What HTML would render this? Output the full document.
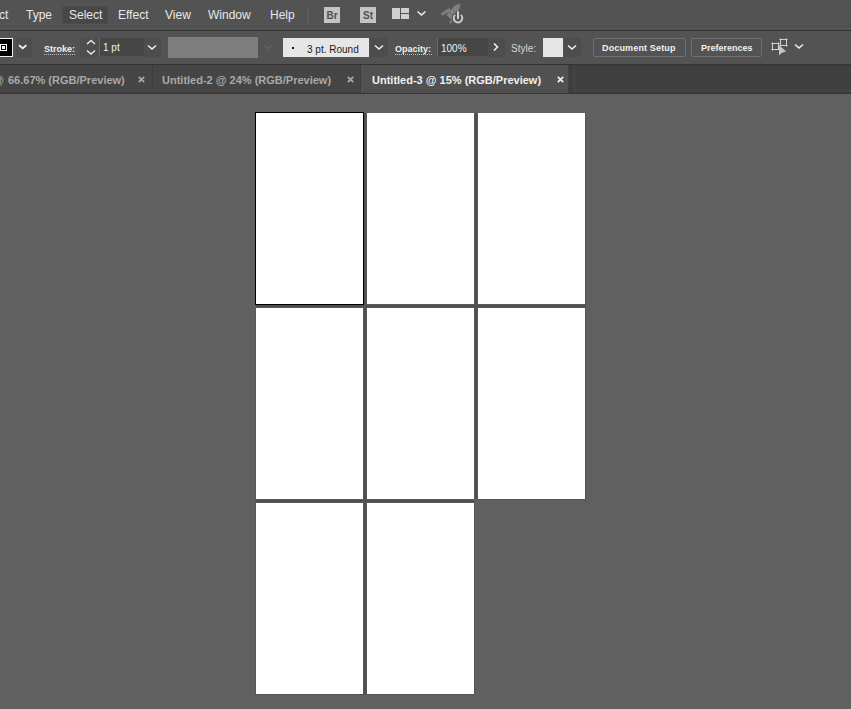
<!DOCTYPE html>
<html><head><meta charset="utf-8">
<style>
*{margin:0;padding:0;box-sizing:border-box}
html,body{width:851px;height:709px;overflow:hidden;background:#606060;font-family:"Liberation Sans",sans-serif}
.a{position:absolute}
#menu{left:0;top:0;width:851px;height:30px;background:#535353}
#mline{left:0;top:30px;width:851px;height:1px;background:#343434}
#ctrl{left:0;top:31px;width:851px;height:33px;background:#535353}
#cline{left:0;top:64px;width:851px;height:1px;background:#343434}
#tabs{left:0;top:65px;width:851px;height:28px;background:#404040}
.mi{top:8px;font-size:12px;color:#e8e8e8;white-space:nowrap;line-height:14px}
.ct{font-size:10px;white-space:nowrap;line-height:12px;margin-top:2px}
.tab{top:65px;height:24px;background:#454545}
.tt{top:74px;font-size:11px;font-weight:bold;color:#a9a9a9;white-space:nowrap;line-height:13px}
.ab{background:#fff}
.gv{background:linear-gradient(to right,#5a5a5a 0,#5a5a5a 1px,#4f4f4f 1px,#4f4f4f 3px,#585858 3px)}
.gh{background:linear-gradient(to bottom,#5a5a5a 0,#5a5a5a 1px,#4f4f4f 1px,#4f4f4f 3px,#585858 3px)}
</style></head><body>
<div id="menu" class="a"></div>
<div id="mline" class="a"></div>
<div class="a" style="left:0;top:26px;width:851px;height:1px;background:#4c4c4c"></div>
<div class="a" style="left:0;top:28px;width:851px;height:1px;background:#575757"></div>
<div id="ctrl" class="a"></div>
<div id="cline" class="a"></div>
<div id="tabs" class="a"></div>

<!-- menu -->
<div class="a mi" style="left:-1px">ct</div>
<div class="a mi" style="left:26px">Type</div>
<div class="a" style="left:62px;top:6px;width:46px;height:18px;background:#474747;border:1px solid #4c4c4c"></div>
<div class="a mi" style="left:69px">Select</div>
<div class="a mi" style="left:118px">Effect</div>
<div class="a mi" style="left:165px">View</div>
<div class="a mi" style="left:208px">Window</div>
<div class="a mi" style="left:270px">Help</div>
<div class="a" style="left:305px;top:8px;width:1px;height:16px;background:#4d4d4d"></div>
<div class="a" style="left:307px;top:8px;width:2px;height:16px;background:#5b5b5b"></div>
<div class="a" style="left:310px;top:8px;width:1px;height:16px;background:#4d4d4d"></div>
<div class="a" style="left:324px;top:7px;width:16px;height:16px;background:#c4c4c4;color:#505050;font-size:10px;font-weight:bold;text-align:center;line-height:17px">Br</div>
<div class="a" style="left:360px;top:7px;width:16px;height:16px;background:#c4c4c4;color:#505050;font-size:10px;font-weight:bold;text-align:center;line-height:17px">St</div>
<div class="a" style="left:392px;top:8px;width:8px;height:11px;background:#cfcfcf"></div>
<div class="a" style="left:401px;top:8px;width:8px;height:5px;background:#cfcfcf"></div>
<div class="a" style="left:401px;top:14px;width:8px;height:5px;background:#cfcfcf"></div>


<svg class="a" style="left:414px;top:8px" width="14" height="12"><polyline points="3.5,3.5 7.5,7 11.5,3.5" fill="none" stroke="#f0f0f0" stroke-width="1.6"/></svg>
<svg class="a" style="left:438px;top:0px" width="28" height="26">
<path d="M4.5 14 L11 9.8" stroke="#7e7e7e" stroke-width="3" stroke-linecap="round"/>
<path d="M8.3 15 L16.8 5.5 L22.5 3.5 L21.2 9.5 L12.7 19 Z" fill="#808080"/>
<path d="M11.5 12.5 L14.5 15.5 M14.5 9.5 L17.5 12.5" stroke="#666" stroke-width="0.9"/>
<path d="M12.5 22.5 L14.5 19" stroke="#777" stroke-width="2.4" stroke-linecap="round"/>
<circle cx="20" cy="18.3" r="6.4" fill="#535353"/>
<path d="M17.2 14.9 A4.3 4.3 0 1 0 22.8 14.9" fill="none" stroke="#cdcdcd" stroke-width="1.9"/>
<path d="M20 11 L20 19" stroke="#535353" stroke-width="3.4"/>
<path d="M20 12 L20 18.3" stroke="#d4d4d4" stroke-width="1.9" stroke-linecap="round"/>
</svg>

<!-- control bar -->
<div class="a" style="left:16px;top:38px;width:16px;height:19px;background:#4d4d4d"></div>
<div class="a" style="left:80px;top:38px;width:19px;height:19px;background:#4e4e4e"></div>
<div class="a" style="left:144px;top:38px;width:17px;height:19px;background:#4d4d4d"></div>
<div class="a" style="left:370px;top:38px;width:18px;height:19px;background:#4d4d4d"></div>
<div class="a" style="left:488px;top:38px;width:17px;height:19px;background:#4d4d4d"></div>
<div class="a" style="left:564px;top:38px;width:17px;height:19px;background:#4d4d4d"></div>

<div class="a" style="left:0;top:38px;width:13px;height:19px;background:#000;border:1px solid #f0f0f0;border-left:none"></div>
<div class="a" style="left:0;top:44px;width:7px;height:7px;background:#fff"></div>
<div class="a" style="left:1px;top:45px;width:5px;height:5px;background:#000"></div>
<div class="a" style="left:2px;top:46px;width:3px;height:3px;background:#fff"></div>
<svg class="a" style="left:16px;top:41px" width="14" height="12"><polyline points="3,4.3 6.7,7.3 10.4,4.3" fill="none" stroke="#f0f0f0" stroke-width="1.8"/></svg>
<div class="a ct" style="left:44px;top:41px;color:#f0f0f0;font-weight:bold;font-size:9px">Stroke:</div>
<div class="a" style="left:44px;top:54px;width:31px;height:1px;border-top:1px dotted #bdbdbd"></div>
<svg class="a" style="left:84px;top:38px" width="14" height="19"><polyline points="3,6 7,2.5 11,6" fill="none" stroke="#e8e8e8" stroke-width="1.4"/><polyline points="3,12.5 7,16 11,12.5" fill="none" stroke="#e8e8e8" stroke-width="1.4"/></svg>
<div class="a" style="left:99px;top:38px;width:1px;height:18px;background:#686868"></div>
<div class="a" style="left:100px;top:38px;width:44px;height:18px;background:#464646"></div>
<div class="a ct" style="left:103px;top:40px;color:#f0f0f0">1 pt</div>
<svg class="a" style="left:145px;top:41px" width="14" height="12"><polyline points="3,4.5 7,8 11,4.5" fill="none" stroke="#f0f0f0" stroke-width="1.6"/></svg>
<div class="a" style="left:168px;top:37px;width:90px;height:21px;background:#7e7e7e"></div>
<svg class="a" style="left:261px;top:41px" width="14" height="12"><polyline points="3,4.5 6.5,7.5 10,4.5" fill="none" stroke="#626262" stroke-width="1.6"/></svg>
<div class="a" style="left:283px;top:38px;width:86px;height:19px;background:#e6e6e6"></div>
<div class="a" style="left:292px;top:47px;width:2px;height:2px;background:#111"></div>
<div class="a ct" style="left:307px;top:42px;color:#1b1b1b">3 pt. Round</div>
<svg class="a" style="left:372px;top:41px" width="14" height="12"><polyline points="3,4.5 7,8 11,4.5" fill="none" stroke="#f0f0f0" stroke-width="1.6"/></svg>
<div class="a ct" style="left:395px;top:41px;color:#f0f0f0;font-weight:bold;font-size:9px">Opacity:</div>
<div class="a" style="left:395px;top:54px;width:37px;height:1px;border-top:1px dotted #bdbdbd"></div>
<div class="a" style="left:437px;top:38px;width:1px;height:18px;background:#686868"></div>
<div class="a" style="left:438px;top:38px;width:50px;height:18px;background:#464646"></div>
<div class="a ct" style="left:441px;top:41px;color:#f0f0f0">100%</div>
<svg class="a" style="left:489px;top:41px" width="14" height="12"><polyline points="5,2.5 8.5,6 5,9.5" fill="none" stroke="#f0f0f0" stroke-width="1.6"/></svg>
<div class="a ct" style="left:511px;top:41px;color:#d4d4d4;font-size:10px">Style:</div>
<div class="a" style="left:543px;top:38px;width:20px;height:19px;background:#e6e6e6"></div>
<svg class="a" style="left:565px;top:41px" width="14" height="12"><polyline points="3,4.5 7,8 11,4.5" fill="none" stroke="#f0f0f0" stroke-width="1.6"/></svg>
<div class="a" style="left:593px;top:38px;width:93px;height:19px;border:1px solid #707070;border-radius:2px"></div>
<div class="a ct" style="left:602px;top:40px;color:#f0f0f0;font-weight:bold;font-size:9px;letter-spacing:0.15px">Document Setup</div>
<div class="a" style="left:691px;top:38px;width:71px;height:19px;border:1px solid #707070;border-radius:2px"></div>
<div class="a ct" style="left:701px;top:40px;color:#f0f0f0;font-weight:bold;font-size:9px">Preferences</div>
<svg class="a" style="left:770px;top:37px" width="20" height="20">
<rect x="2.5" y="6.5" width="6" height="6" fill="none" stroke="#d0d0d0" stroke-width="1"/>
<path d="M1 6.5H2M2.5 5V6M8.5 5V6M9 6.5H10M1 12.5H2M2.5 13V14" stroke="#9a9a9a" stroke-width="1"/>
<rect x="10.5" y="2.5" width="6" height="6" fill="none" stroke="#d0d0d0" stroke-width="1"/>
<path d="M9 2.5H10M10.5 1V2M16.5 1V2M17 2.5H18M17 8.5H18M16.5 9V10" stroke="#9a9a9a" stroke-width="1"/>
<path d="M9 8 L9 18.5 L11.5 16 L16 14.5 Z" fill="#c4c4c4"/>
</svg>
<svg class="a" style="left:792px;top:40px" width="14" height="12"><polyline points="3,4.5 7,8 11,4.5" fill="none" stroke="#f0f0f0" stroke-width="1.6"/></svg>

<!-- tabs -->
<div class="a tab" style="left:0;width:152px"></div>
<div class="a" style="left:152px;top:65px;width:1px;height:24px;background:#3c3c3c"></div>
<div class="a tab" style="left:153px;width:207px"></div>
<div class="a" style="left:360px;top:65px;width:1px;height:24px;background:#3c3c3c"></div>
<div class="a" style="left:0;top:89px;width:361px;height:2px;background:#484848"></div>
<div class="a" style="left:0;top:91px;width:361px;height:2px;background:#414141"></div>
<div class="a" style="left:575px;top:90px;width:276px;height:1px;background:#474747"></div>
<div class="a" style="left:569px;top:92px;width:282px;height:1px;background:#3a3a3a"></div>
<div class="a" style="left:569px;top:65px;width:282px;height:2px;background:#3d3d3d"></div>
<div class="a tab" style="left:361px;width:207px;height:28px;background:#515151"></div>
<div class="a" style="left:361px;top:89px;width:207px;height:4px;background:#4e4e4e"></div>
<div class="a" style="left:362px;top:65px;width:1px;height:28px;background:#565656"></div>
<div class="a" style="left:0;top:93px;width:851px;height:1px;background:#373737"></div>
<div class="a" style="left:570px;top:65px;width:1px;height:28px;background:#3a3a3a"></div>
<div class="a" style="left:574px;top:65px;width:1px;height:28px;background:#484848"></div>
<div class="a tt" style="left:-7px;font-weight:normal">@</div>
<div class="a tt" style="left:8px">66.67% (RGB/Preview)</div>
<div class="a tt" style="left:162px">Untitled-2 @ 24% (RGB/Preview)</div>
<div class="a tt" style="left:372px;color:#f0f0f0">Untitled-3 @ 15% (RGB/Preview)</div>
<svg class="a" style="left:137px;top:75px" width="10" height="9"><path d="M1.8 1.8L7.2 7.2M7.2 1.8L1.8 7.2" stroke="#a9a9a9" stroke-width="1.7"/></svg>
<svg class="a" style="left:346px;top:75px" width="10" height="9"><path d="M1.8 1.8L7.2 7.2M7.2 1.8L1.8 7.2" stroke="#a9a9a9" stroke-width="1.7"/></svg>
<svg class="a" style="left:556px;top:75px" width="10" height="9"><path d="M1.8 1.8L7.2 7.2M7.2 1.8L1.8 7.2" stroke="#f0f0f0" stroke-width="1.7"/></svg>

<!-- canvas artboards -->
<div class="a gv" style="left:363px;top:113px;width:4px;height:582px"></div>
<div class="a gv" style="left:474px;top:113px;width:4px;height:386px"></div>
<div class="a gh" style="left:256px;top:304px;width:329px;height:4px"></div>
<div class="a gh" style="left:256px;top:499px;width:218px;height:4px"></div>
<div class="a" style="left:585px;top:113px;width:1px;height:387px;background:#545454"></div>
<div class="a" style="left:474px;top:503px;width:1px;height:192px;background:#545454"></div>
<div class="a" style="left:257px;top:694px;width:218px;height:1px;background:#545454"></div>
<div class="a" style="left:255px;top:308px;width:1px;height:386px;background:#585858"></div>
<div class="a" style="left:479px;top:499px;width:107px;height:1px;background:#545454"></div>
<div class="a ab" style="left:255px;top:112px;width:109px;height:193px;border:1px solid #000"></div>
<div class="a ab" style="left:367px;top:113px;width:107px;height:191px"></div>
<div class="a ab" style="left:478px;top:113px;width:107px;height:191px"></div>
<div class="a ab" style="left:256px;top:308px;width:107px;height:191px"></div>
<div class="a ab" style="left:367px;top:308px;width:107px;height:191px"></div>
<div class="a ab" style="left:478px;top:308px;width:107px;height:191px"></div>
<div class="a ab" style="left:256px;top:503px;width:107px;height:191px"></div>
<div class="a ab" style="left:367px;top:503px;width:107px;height:191px"></div>
</body></html>
